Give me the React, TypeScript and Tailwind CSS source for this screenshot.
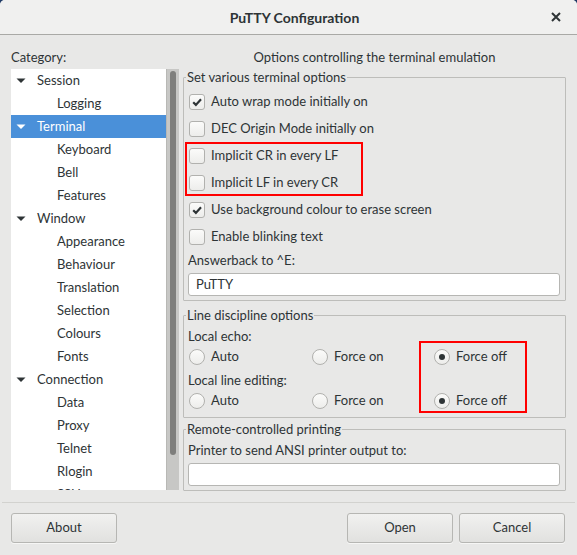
import React from 'react';

type TreeItem = { label: string; level: 0 | 1; arrow?: 'open' | 'closed'; selected?: boolean };

const tree: TreeItem[] = [
  { label: 'Session', level: 0, arrow: 'open' },
  { label: 'Logging', level: 1 },
  { label: 'Terminal', level: 0, arrow: 'open', selected: true },
  { label: 'Keyboard', level: 1 },
  { label: 'Bell', level: 1 },
  { label: 'Features', level: 1 },
  { label: 'Window', level: 0, arrow: 'open' },
  { label: 'Appearance', level: 1 },
  { label: 'Behaviour', level: 1 },
  { label: 'Translation', level: 1 },
  { label: 'Selection', level: 1 },
  { label: 'Colours', level: 1 },
  { label: 'Fonts', level: 1 },
  { label: 'Connection', level: 0, arrow: 'open' },
  { label: 'Data', level: 1 },
  { label: 'Proxy', level: 1 },
  { label: 'Telnet', level: 1 },
  { label: 'Rlogin', level: 1 },
  { label: 'SSH', level: 1, arrow: 'closed' },
];

const terminalOptions = [
  { label: 'Auto wrap mode initially on', checked: true },
  { label: 'DEC Origin Mode initially on', checked: false },
  { label: 'Implicit CR in every LF', checked: false },
  { label: 'Implicit LF in every CR', checked: false },
  { label: 'Use background colour to erase screen', checked: true },
  { label: 'Enable blinking text', checked: false },
];

function Arrow({ kind, light }: { kind: 'open' | 'closed'; light?: boolean }) {
  const fill = light ? '#ffffff' : '#2e3436';
  return (
    <svg width="10" height="10" viewBox="0 0 10 10" className="shrink-0">
      {kind === 'open' ? <path d="M0.5 2.5 L9.5 2.5 L5 7 Z" fill={fill} /> : <path d="M3 0.5 L7.5 5 L3 9.5 Z" fill={fill} />}
    </svg>
  );
}

function CheckBox({ checked }: { checked: boolean }) {
  return (
    <span className="flex h-4 w-4 shrink-0 items-center justify-center rounded-[3px] border border-[#b1b1ae] bg-gradient-to-b from-[#fbfbfa] to-[#ededeb]">
      {checked && (
        <svg width="12" height="12" viewBox="0 0 12 12">
          <path d="M2.2 6.2 L4.9 8.9 L10 3.2" fill="none" stroke="#2e3436" strokeWidth="2.2" />
        </svg>
      )}
    </span>
  );
}

function Radio({ checked }: { checked: boolean }) {
  return (
    <span className="flex h-4 w-4 shrink-0 items-center justify-center rounded-full border border-[#b1b1ae] bg-gradient-to-b from-[#fbfbfa] to-[#ededeb]">
      {checked && <span className="h-[6px] w-[6px] rounded-full bg-[#2e3436]" />}
    </span>
  );
}

function Frame({ title, className, children }: { title: string; className?: string; children: React.ReactNode }) {
  return (
    <fieldset className={`relative rounded-[1px] border border-[#bdbdba] px-1 ${className ?? ''}`}>
      <legend className="-ml-[2px] px-[1px] leading-4">{title}</legend>
      {children}
    </fieldset>
  );
}

// red highlight rectangle drawn on top of a group of controls
function Highlight({ className }: { className: string }) {
  return <div className={`pointer-events-none absolute border-[2px] border-solid border-[#ff0000] ${className}`} />;
}

function Button({ children }: { children: React.ReactNode }) {
  return (
    <button className="h-[30px] w-[106px] rounded-[3px] border border-[#b6b6b3] bg-gradient-to-b from-[#f1f1f0] to-[#e1e1df] text-[#2e3436] shadow-[0_1px_0_rgba(255,255,255,0.6)]">
      {children}
    </button>
  );
}

function RadioRow({ value, className }: { value: number; className?: string }) {
  const choices = ['Auto', 'Force on', 'Force off'];
  return (
    <div className={`grid h-6 grid-cols-[123px_122px_1fr] items-center pl-[1px] ${className ?? ''}`}>
      {choices.map((c, i) => (
        <div key={c} className="flex items-center gap-[6px]">
          <Radio checked={i === value} />
          <span>{c}</span>
        </div>
      ))}
    </div>
  );
}

export default function App() {
  return (
    <div className="h-[555px] w-[577px] bg-[#1f3a66]">
      <div
        className="flex h-[555px] w-[577px] flex-col overflow-hidden rounded-t-[5px] bg-[#e8e8e7] text-[13px] text-[#2e3436]"
        style={{ fontFamily: 'Lato, "Noto Sans", sans-serif' }}
      >
        {/* header bar */}
        <div className="flex h-[35px] shrink-0 items-center border-b border-[#a9a9a6] bg-[#f0f0ef] pl-[38px] pr-[16px]">
          <div className="flex-1 text-center text-[14px] font-bold">PuTTY Configuration</div>
          <svg width="10" height="10" viewBox="0 0 10 10">
            <path d="M1 1 L9 9 M9 1 L1 9" stroke="#2e3436" strokeWidth="2" />
          </svg>
        </div>

        <div className="flex h-[467px] shrink-0 gap-1 pl-[11px] pr-[11px] pt-[14px]">
          {/* category tree */}
          <div className="flex w-[168px] flex-col">
            <div className="h-4 leading-4">Category:</div>
            <div className="mt-1 flex h-[421px] overflow-hidden bg-white">
              <div className="flex-1">
                {tree.map((t) => (
                  <div
                    key={t.label}
                    className={`flex h-[23px] items-center ${t.selected ? 'bg-[#4a90d9] text-white' : ''}`}
                  >
                    {t.level === 0 ? (
                      <div className="flex items-center pl-[5px]">
                        {t.arrow && <Arrow kind={t.arrow} light={t.selected} />}
                        <span className="ml-[11px]">{t.label}</span>
                      </div>
                    ) : (
                      <div className="flex items-center pl-[26px]">
                        <span className="w-[20px]">{t.arrow && <Arrow kind={t.arrow} />}</span>
                        <span>{t.label}</span>
                      </div>
                    )}
                  </div>
                ))}
              </div>
              <div className="w-[13px] shrink-0 border-l border-[#b8b8b5] bg-[#c7c7c5] px-[3px] pt-[2px]">
                <div className="h-[384px] rounded-full bg-[#7e7e7c]" />
              </div>
            </div>
          </div>

          {/* options panel */}
          <div className="flex flex-1 flex-col">
            <div className="h-4 text-center leading-4">Options controlling the terminal emulation</div>
            <Frame title="Set various terminal options" className="mt-1 pb-[4px]">
              <div className="pt-[3px]">
                {terminalOptions.map((o) => (
                  <div key={o.label} className="flex h-[27px] items-center gap-[6px] pl-[1px]">
                    <CheckBox checked={o.checked} />
                    <span>{o.label}</span>
                  </div>
                ))}
              </div>
              <div className="mt-[2px] h-4 leading-4">Answerback to ^E:</div>
              <div className="mr-[1px] mt-[5px] flex h-[23px] items-center rounded-[3px] border border-[#b6b6b3] bg-white pl-[7px]">
                PuTTY
              </div>
              <Highlight className="left-[1px] top-[57px] h-[54px] w-[178px]" />
            </Frame>

            <Frame title="Line discipline options" className="mt-[6px] pb-[4px]">
              <div className="mt-[5px] h-4 leading-4">Local echo:</div>
              <RadioRow value={2} className="mt-[1px]" />
              <div className="mt-[3px] h-4 leading-4">Local line editing:</div>
              <RadioRow value={2} className="mt-[1px]" />
              <Highlight className="left-[235px] top-[18px] h-[72px] w-[108px]" />
            </Frame>

            <Frame title="Remote-controlled printing" className="mt-[3px] pb-[4px]">
              <div className="mt-[5px] h-4 leading-4">Printer to send ANSI printer output to:</div>
              <div className="mr-[1px] mt-[5px] h-[23px] rounded-[3px] border border-[#b6b6b3] bg-white" />
            </Frame>
          </div>
        </div>

        <div className="mx-[2px] border-t border-[#d2d2cf]" />

        <div className="flex items-center gap-[6px] pl-[11px] pr-[12px] pt-[10px]">
          <Button>About</Button>
          <div className="flex-1" />
          <Button>Open</Button>
          <Button>Cancel</Button>
        </div>
      </div>
    </div>
  );
}
